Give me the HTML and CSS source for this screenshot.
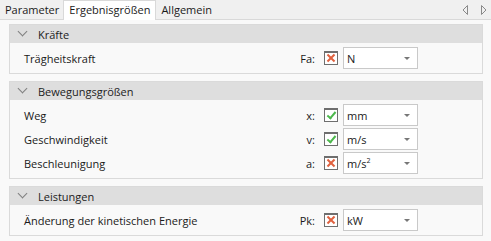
FILE: index.html
```html
<!DOCTYPE html>
<html>
<head>
<meta charset="utf-8">
<link rel="stylesheet" href="styles.css">
</head>
<body>
<div class="tabbar">
  <div class="tab">Parameter</div>
  <div class="tab active">Ergebnisgrößen</div>
  <div class="tab">Allgemein</div>
  <div class="nav">
    <svg width="7" height="10" viewBox="0 0 7 10"><path d="M5.5 0.5 L1 5 L5.5 9.5 Z" fill="none" stroke="#8a8a8a" stroke-width="1"/></svg>
    <svg width="7" height="10" viewBox="0 0 7 10"><path d="M1.5 0.5 L6 5 L1.5 9.5 Z" fill="none" stroke="#8a8a8a" stroke-width="1"/></svg>
  </div>
</div>
<div class="content">
  <section class="group">
    <div class="ghead"><span class="chev"></span>Kräfte</div>
    <div class="rows">
      <div class="row">
        <span class="lbl">Trägheitskraft</span>
        <span class="sym">Fa:</span>
        <span class="cb off"></span>
        <span class="dd"><span class="val">N</span><span class="arr"></span></span>
      </div>
    </div>
  </section>
  <section class="group">
    <div class="ghead"><span class="chev"></span>Bewegungsgrößen</div>
    <div class="rows">
      <div class="row">
        <span class="lbl">Weg</span>
        <span class="sym">x:</span>
        <span class="cb on"></span>
        <span class="dd"><span class="val">mm</span><span class="arr"></span></span>
      </div>
      <div class="row">
        <span class="lbl">Geschwindigkeit</span>
        <span class="sym">v:</span>
        <span class="cb on"></span>
        <span class="dd"><span class="val">m/s</span><span class="arr"></span></span>
      </div>
      <div class="row">
        <span class="lbl">Beschleunigung</span>
        <span class="sym">a:</span>
        <span class="cb off"></span>
        <span class="dd"><span class="val">m/s<sup>2</sup></span><span class="arr"></span></span>
      </div>
    </div>
  </section>
  <section class="group">
    <div class="ghead"><span class="chev"></span>Leistungen</div>
    <div class="rows">
      <div class="row">
        <span class="lbl">Änderung der kinetischen Energie</span>
        <span class="sym">Pk:</span>
        <span class="cb off"></span>
        <span class="dd"><span class="val">kW</span><span class="arr"></span></span>
      </div>
    </div>
  </section>
</div>
</body>
</html>
```
FILE: styles.css
```css
* { box-sizing: border-box; }
html, body { margin: 0; padding: 0; }
body {
  width: 491px;
  height: 241px;
  background: #f9f9f9;
  font-family: "Open Sans", "Noto Sans", sans-serif;
  font-size: 11px;
  color: #1a1a1a;
  overflow: hidden;
}
.tabbar {
  height: 20px;
  background: #f0f0f0;
  border-bottom: 1px solid #d9d9d9;
  display: flex;
  align-items: flex-end;
  position: relative;
}
.tab {
  height: 19px;
  padding: 0 4px;
  line-height: 17px;
  border: 1px solid transparent;
  border-bottom: none;
}
.tab:first-child { padding-left: 4px; padding-right: 3px; }
.tab.active {
  background: #ffffff;
  border-color: #d9d9d9;
  height: 20px;
  margin-bottom: -1px;
  padding: 0 5px;
}
.nav {
  margin-left: auto;
  display: flex;
  gap: 11px;
  align-self: center;
  padding-right: 4px;
}
.nav svg { display: block; }
.content {
  padding: 4px 8px 0 9px;
  display: flex;
  flex-direction: column;
  gap: 7px;
}
.group {
  border: 1px solid #dadada;
  background: #f9f9f9;
}
.ghead {
  height: 18px;
  background: #dedede;
  display: flex;
  align-items: center;
  padding-left: 7px;
  color: #222;
}
.chev {
  width: 11px;
  height: 6px;
  margin-right: 10px;
  position: relative;
}
.chev::before {
  content: "";
  position: absolute;
  left: 2px;
  top: -3px;
  width: 6px;
  height: 6px;
  border-right: 1.5px solid #808080;
  border-bottom: 1.5px solid #808080;
  transform: rotate(45deg);
}
.rows { padding: 3px 0; }
.row {
  height: 24px;
  display: grid;
  grid-template-columns: 1fr auto 14px 80px;
  align-items: center;
  padding-left: 14px;
  padding-right: 64px;
}
.sym { margin-right: 9px; text-align: right; }
.cb {
  width: 14px;
  height: 14px;
  border: 1px solid #6e6e6e;
  border-top-width: 2px;
  background: #fff;
  position: relative;
}
.cb.on::after {
  content: "";
  position: absolute;
  left: 4px;
  top: 0px;
  width: 3px;
  height: 7px;
  border-right: 2px solid #4cb84c;
  border-bottom: 2px solid #4cb84c;
  transform: rotate(40deg);
}
.cb.off::before, .cb.off::after {
  content: "";
  position: absolute;
  left: 1px;
  top: 4px;
  width: 10px;
  height: 2px;
  background: #e0613f;
  transform: rotate(45deg);
}
.cb.off::after { transform: rotate(-45deg); }
.dd {
  margin-left: 5px;
  width: 75px;
  height: 22px;
  background: #fff;
  border: 1px solid #c9c9c9;
  display: flex;
  align-items: center;
  padding-left: 3px;
  position: relative;
}
.dd sup { font-size: 7px; vertical-align: 5px; line-height: 0; }
.arr {
  position: absolute;
  right: 7px;
  top: 9px;
  width: 0;
  height: 0;
  border-left: 3px solid transparent;
  border-right: 3px solid transparent;
  border-top: 3px solid #777;
}
```
